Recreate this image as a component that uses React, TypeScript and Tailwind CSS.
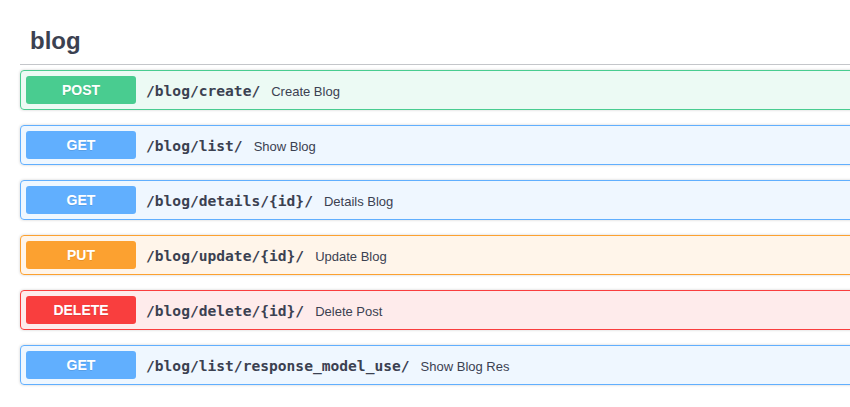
import React from "react";

type Op = {
  method: string;
  path: string;
  desc: string;
  row: string;
  badge: string;
};

const ops: Op[] = [
  { method: "POST", path: "/blog/create/", desc: "Create Blog", row: "border-[#49cc90] bg-[rgba(73,204,144,0.1)]", badge: "bg-[#49cc90]" },
  { method: "GET", path: "/blog/list/", desc: "Show Blog", row: "border-[#61affe] bg-[rgba(97,175,254,0.1)]", badge: "bg-[#61affe]" },
  { method: "GET", path: "/blog/details/{id}/", desc: "Details Blog", row: "border-[#61affe] bg-[rgba(97,175,254,0.1)]", badge: "bg-[#61affe]" },
  { method: "PUT", path: "/blog/update/{id}/", desc: "Update Blog", row: "border-[#fca130] bg-[rgba(252,161,48,0.1)]", badge: "bg-[#fca130]" },
  { method: "DELETE", path: "/blog/delete/{id}/", desc: "Delete Post", row: "border-[#f93e3e] bg-[rgba(249,62,62,0.1)]", badge: "bg-[#f93e3e]" },
  { method: "GET", path: "/blog/list/response_model_use/", desc: "Show Blog Res", row: "border-[#61affe] bg-[rgba(97,175,254,0.1)]", badge: "bg-[#61affe]" },
];

export default function App() {
  return (
    <div className="w-[850px] h-[407px] overflow-hidden bg-white font-['Liberation_Sans',Arial,sans-serif] text-[#3b4151]">
      <div className="ml-5 w-[880px]">
        <div className="pl-[10px] pt-[25px] pb-[7px] border-b border-[rgba(59,65,81,0.3)]">
          <span className="text-[24px] leading-8 font-bold text-[#3b4151]">blog</span>
        </div>
        <div className="mt-[5px] flex flex-col gap-[15px]">
          {ops.map((op, i) => (
            <div
              key={i}
              className={`flex items-center p-[5px] border rounded-[4px] shadow-[0_0_3px_rgba(0,0,0,0.19)] ${op.row}`}
            >
              <div
                className={`w-[110px] h-[28px] pt-[1px] flex items-center justify-center rounded-[3px] text-white text-[14px] font-bold [text-shadow:0_1px_0_rgba(0,0,0,0.1)] ${op.badge}`}
              >
                {op.method}
              </div>
              <span className="ml-[10px] pt-[2px] font-['DejaVu_Sans_Mono',monospace] font-bold text-[14.6px] text-[#3b4151]">
                {op.path}
              </span>
              <span className="ml-[11px] pt-[3px] text-[13px] text-[#3b4151]">{op.desc}</span>
            </div>
          ))}
        </div>
      </div>
    </div>
  );
}
